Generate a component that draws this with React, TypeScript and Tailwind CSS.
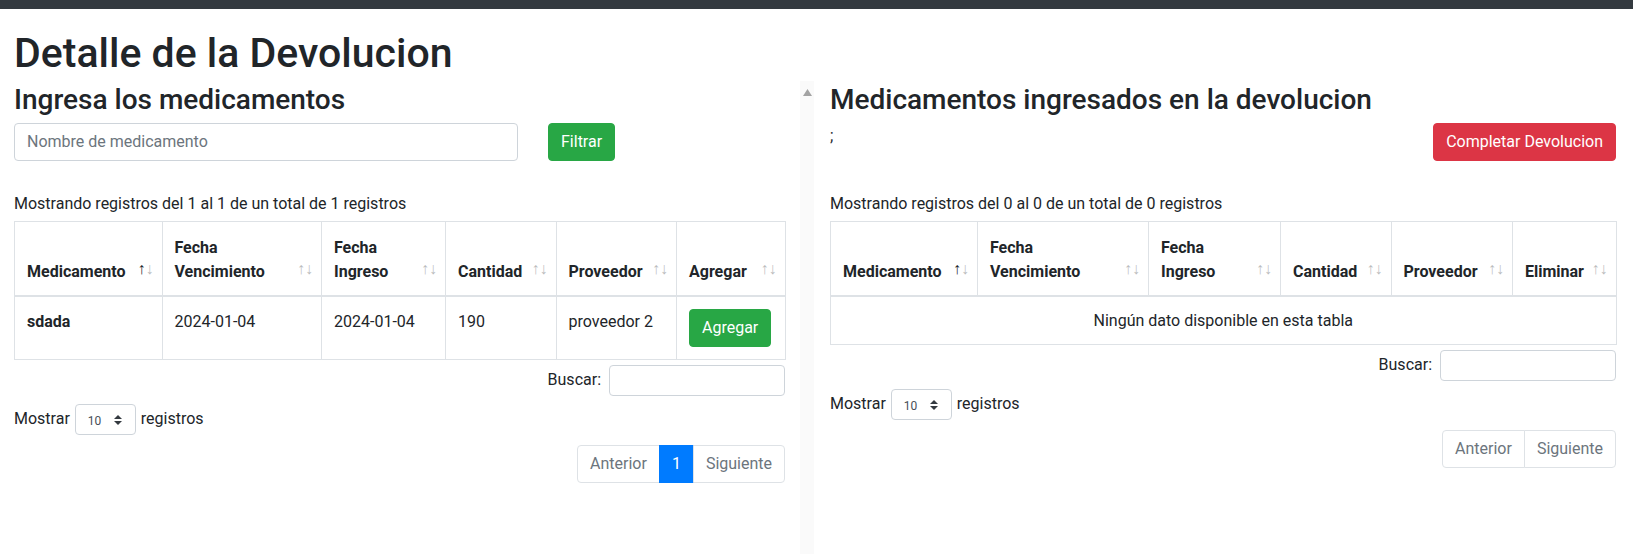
import React from "react";

type Col = { label: React.ReactNode; w: number; sorted?: boolean };

function SortArrows({ sorted }: { sorted?: boolean }) {
  return (
    <>
      <span
        className={`absolute right-[16px] bottom-[14px] leading-6 font-normal font-[family-name:'Liberation_Sans',sans-serif] text-[#212529] ${sorted ? "opacity-100" : "opacity-30"}`}
      >
        ↑
      </span>
      <span className="absolute right-[8px] bottom-[14px] leading-6 font-normal font-[family-name:'Liberation_Sans',sans-serif] text-[#212529] opacity-30">
        ↓
      </span>
    </>
  );
}

function SelectLength() {
  return (
    <div className="relative inline-flex items-center h-[31px] w-[61px] border border-[#ced4da] rounded-[4px] bg-white pl-[12px] text-[12px] text-[#495057]">
      <span className="pt-[3px]">10</span>
      <svg className="absolute right-[13px] top-[10px]" width="8" height="10" viewBox="0 0 4 5">
        <path d="M2 0L0 2h4zm0 5L0 3h4z" fill="#343a40" />
      </svg>
    </div>
  );
}

function DataTable({
  cols,
  width,
  children,
}: {
  cols: Col[];
  width: number;
  children: React.ReactNode;
}) {
  return (
    <table
      className="table-fixed border-collapse mt-[5px] mb-[5px] text-[#212529]"
      style={{ width }}
    >
      <colgroup>
        {cols.map((c, i) => (
          <col key={i} style={{ width: c.w }} />
        ))}
      </colgroup>
      <thead>
        <tr>
          {cols.map((c, i) => (
            <th
              key={i}
              className="relative text-left align-bottom font-bold leading-6 pt-[13px] pb-3 pl-3 pr-[30px] border border-[#dee2e6] border-b-2"
            >
              <span className="relative top-px">{c.label}</span>
              <SortArrows sorted={c.sorted} />
            </th>
          ))}
        </tr>
      </thead>
      <tbody>{children}</tbody>
    </table>
  );
}

function Footer({ pages }: { pages: boolean }) {
  return (
    <>
      <div className="flex justify-end items-center h-[31px]">
        <span className="mr-[8px]">Buscar:</span>
        <div className="w-[176px] h-[31px] border border-[#ced4da] rounded-[4px] bg-white" />
      </div>
      <div className="flex items-center h-[31px] mt-2">
        <span>Mostrar</span>
        <span className="mx-[5px]">
          <SelectLength />
        </span>
        <span>registros</span>
      </div>
      <div className="flex justify-end mt-[10px]">
        <div className="flex leading-5">
          <span className="px-3 py-2 border border-[#dee2e6] rounded-l-[4px] text-[#6c757d] bg-white">
            Anterior
          </span>
          {pages && (
            <span className="px-3 py-2 border border-[#007bff] bg-[#007bff] text-white -ml-px">1</span>
          )}
          <span className="px-3 py-2 border border-[#dee2e6] rounded-r-[4px] text-[#6c757d] bg-white -ml-px">
            Siguiente
          </span>
        </div>
      </div>
    </>
  );
}

const td = "align-top pt-[13px] pb-[11px] px-3 border border-[#dee2e6]";

export default function App() {
  const leftCols: Col[] = [
    { label: "Medicamento", w: 147.5, sorted: true },
    { label: "Fecha Vencimiento", w: 159.5 },
    { label: "Fecha Ingreso", w: 124 },
    { label: "Cantidad", w: 110.5 },
    { label: "Proveedor", w: 120.5 },
    { label: "Agregar", w: 108.5 },
  ];
  const rightCols: Col[] = [
    { label: "Medicamento", w: 147, sorted: true },
    { label: "Fecha Vencimiento", w: 171 },
    { label: "Fecha Ingreso", w: 132 },
    { label: "Cantidad", w: 110.5 },
    { label: "Proveedor", w: 121.5 },
    { label: "Eliminar", w: 103.5 },
  ];

  return (
    <div className="h-[554px] overflow-hidden flex flex-col bg-white text-[#212529] text-base leading-6 font-[family-name:Roboto,sans-serif]">
      <div className="h-[9px] bg-[#343a40] shrink-0" />
      <h1 className="text-[41px] leading-[48px] font-medium mt-[20px] mb-[4px] pl-[14px] text-[#212529]">
        Detalle de la Devolucion
      </h1>
      <div className="flex flex-1 pl-[14px] pr-[17px]">
        {/* Left column */}
        <div className="w-[771px] shrink-0">
          <h3 className="text-[28px] leading-[1.2] font-medium pt-[2px] mb-[6px]">Ingresa los medicamentos</h3>
          <div className="flex items-center gap-[30px]">
            <div className="w-[504px] h-[38px] border border-[#ced4da] rounded-[4px] px-3 flex items-center text-[#6c757d]">
              Nombre de medicamento
            </div>
            <button className="h-[38px] px-3 border border-[#28a745] bg-[#28a745] text-white rounded-[4px] leading-6">
              Filtrar
            </button>
          </div>
          <div className="mt-[31px]">Mostrando registros del 1 al 1 de un total de 1 registros</div>
          <DataTable cols={leftCols} width={771}>
            <tr>
              <td className={`${td} font-bold`}>sdada</td>
              <td className={td}>2024-01-04</td>
              <td className={td}>2024-01-04</td>
              <td className={td}>190</td>
              <td className={td}>proveedor 2</td>
              <td className="align-top p-3 border border-[#dee2e6]">
                <button className="h-[38px] px-3 border border-[#28a745] bg-[#28a745] text-white rounded-[4px] leading-6">
                  Agregar
                </button>
              </td>
            </tr>
          </DataTable>
          <Footer pages />
        </div>

        {/* Scrollbar strip */}
        <div className="w-[14px] ml-[15px] shrink-0 bg-[#fafafa] relative">
          <svg className="absolute left-[3px] top-[8px]" width="9" height="7" viewBox="0 0 9 7">
            <path d="M4.5 0L9 7H0z" fill="#a3a3a3" />
          </svg>
        </div>

        {/* Right column */}
        <div className="w-[786px] ml-[16px] shrink-0">
          <h3 className="text-[28px] leading-[1.2] font-medium pt-[2px] mb-[6px]">Medicamentos ingresados en la devolucion</h3>
          <div className="flex items-start justify-between h-[38px]">
            <span className="mt-px">;</span>
            <button className="h-[38px] px-3 border border-[#dc3545] bg-[#dc3545] text-white rounded-[4px] leading-6">
              Completar Devolucion
            </button>
          </div>
          <div className="mt-[31px]">Mostrando registros del 0 al 0 de un total de 0 registros</div>
          <DataTable cols={rightCols} width={786}>
            <tr>
              <td colSpan={6} className="text-center pt-[12px] pb-[11px] px-3 border border-[#dee2e6]">
                Ningún dato disponible en esta tabla
              </td>
            </tr>
          </DataTable>
          <Footer pages={false} />
        </div>
      </div>
    </div>
  );
}
